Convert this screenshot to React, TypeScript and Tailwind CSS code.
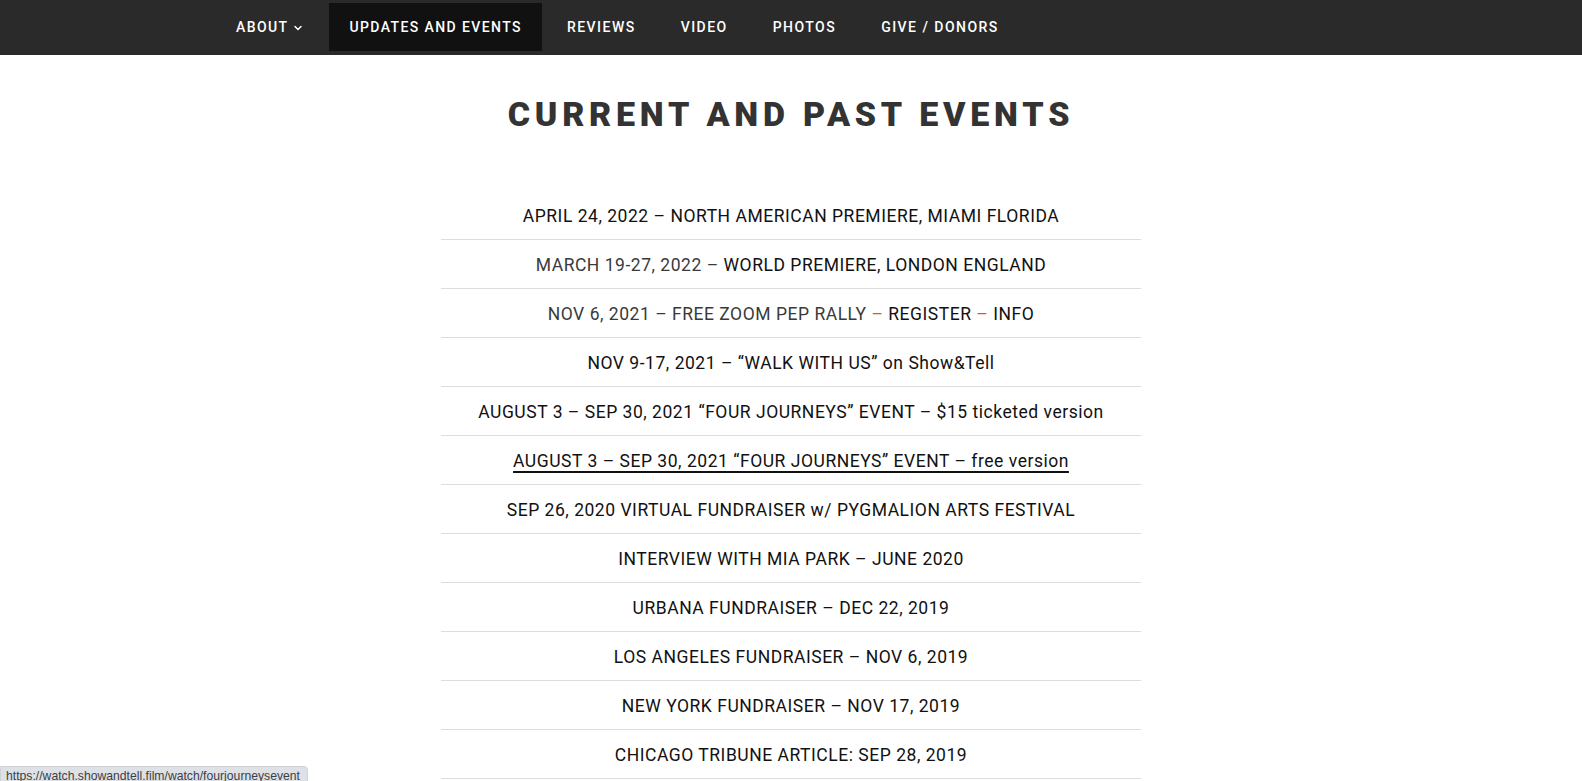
import { ChevronDown } from 'lucide-react';

type Part = { text: string; tone?: 'link' | 'body' | 'accent' };
type Row = { parts: Part[]; underline?: boolean };

const nav = ['UPDATES AND EVENTS', 'REVIEWS', 'VIDEO', 'PHOTOS', 'GIVE / DONORS'];

const rows: Row[] = [
  { parts: [{ text: 'APRIL 24, 2022 – NORTH AMERICAN PREMIERE, MIAMI FLORIDA' }] },
  {
    parts: [
      { text: 'MARCH 19-27, 2022 – ', tone: 'body' },
      { text: 'WORLD PREMIERE, LONDON ENGLAND' },
    ],
  },
  {
    parts: [
      { text: 'NOV 6, 2021 – FREE ZOOM PEP RALLY ', tone: 'body' },
      { text: '–', tone: 'accent' },
      { text: ' REGISTER ' },
      { text: '–', tone: 'accent' },
      { text: ' INFO' },
    ],
  },
  { parts: [{ text: 'NOV 9-17, 2021 – “WALK WITH US” on Show&Tell' }] },
  { parts: [{ text: 'AUGUST 3 – SEP 30, 2021 “FOUR JOURNEYS” EVENT – $15 ticketed version' }] },
  { parts: [{ text: 'AUGUST 3 – SEP 30, 2021 “FOUR JOURNEYS” EVENT – free version' }], underline: true },
  { parts: [{ text: 'SEP 26, 2020 VIRTUAL FUNDRAISER w/ PYGMALION ARTS FESTIVAL' }] },
  { parts: [{ text: 'INTERVIEW WITH MIA PARK – JUNE 2020' }] },
  { parts: [{ text: 'URBANA FUNDRAISER – DEC 22, 2019' }] },
  { parts: [{ text: 'LOS ANGELES FUNDRAISER – NOV 6, 2019' }] },
  { parts: [{ text: 'NEW YORK FUNDRAISER – NOV 17, 2019' }] },
  { parts: [{ text: 'CHICAGO TRIBUNE ARTICLE: SEP 28, 2019' }] },
  { parts: [{ text: 'PRESS RELEASE – SEPTEMBER 2019' }] },
];

function toneClass(tone?: Part['tone']) {
  if (tone === 'body') return 'text-[#3a3a3a]';
  if (tone === 'accent') return 'text-[#e0561f]';
  return 'text-[#111111]';
}

export default function App() {
  return (
    <div className="relative h-[781px] overflow-hidden bg-white font-['Roboto',sans-serif]">
      {/* top bar */}
      <header className="h-[55px] bg-[#2a2a2a]">
        <nav className="mx-auto flex h-full w-[1150px] items-start gap-[5px] pt-[3px]">
          <a className="flex h-[48px] items-center gap-1 px-5 pt-[1px] text-[14px] font-medium tracking-[0.1em] text-white">
            ABOUT
            <ChevronDown className="h-3 w-3" strokeWidth={3} />
          </a>
          {nav.map((item, i) => (
            <a
              key={item}
              className={
                i === 0
                  ? 'flex h-[48px] items-center bg-[#111111] px-5 pt-[1px] text-[14px] font-medium tracking-[0.1em] text-white'
                  : 'flex h-[48px] items-center px-5 pt-[1px] text-[14px] font-medium tracking-[0.105em] text-white'
              }
            >
              {item}
            </a>
          ))}
        </nav>
      </header>

      <main className="pt-[39px]">
        <h1 className="text-center text-[34px] font-black leading-[41px] tracking-[0.14em] text-[#333333]">
          CURRENT AND PAST EVENTS
        </h1>

        <ul className="mx-auto mt-[56px] w-[700px]">
          {rows.map((row, i) => (
            <li
              key={i}
              className="flex h-[49px] items-center justify-center border-b border-[#dddddd] pt-[3px] text-[17.5px] tracking-[0.03em]"
            >
              <span
                className={
                  row.underline
                    ? 'underline decoration-[#111111] decoration-2 underline-offset-[4px]'
                    : ''
                }
              >
                {row.parts.map((p, j) => (
                  <span key={j} className={toneClass(p.tone)}>
                    {p.text}
                  </span>
                ))}
              </span>
            </li>
          ))}
        </ul>
      </main>

      {/* browser status bubble */}
      <div className="absolute left-0 top-[766px] h-[22px] w-[308px] rounded-tr-[4px] border border-[#cfd2d6] bg-[#dee1e6] pl-[5px] pt-[1px] font-['Liberation_Sans',sans-serif] text-[12.2px] leading-[16px] text-[#3c4043]">
        https://watch.showandtell.film/watch/fourjourneysevent
      </div>
    </div>
  );
}
